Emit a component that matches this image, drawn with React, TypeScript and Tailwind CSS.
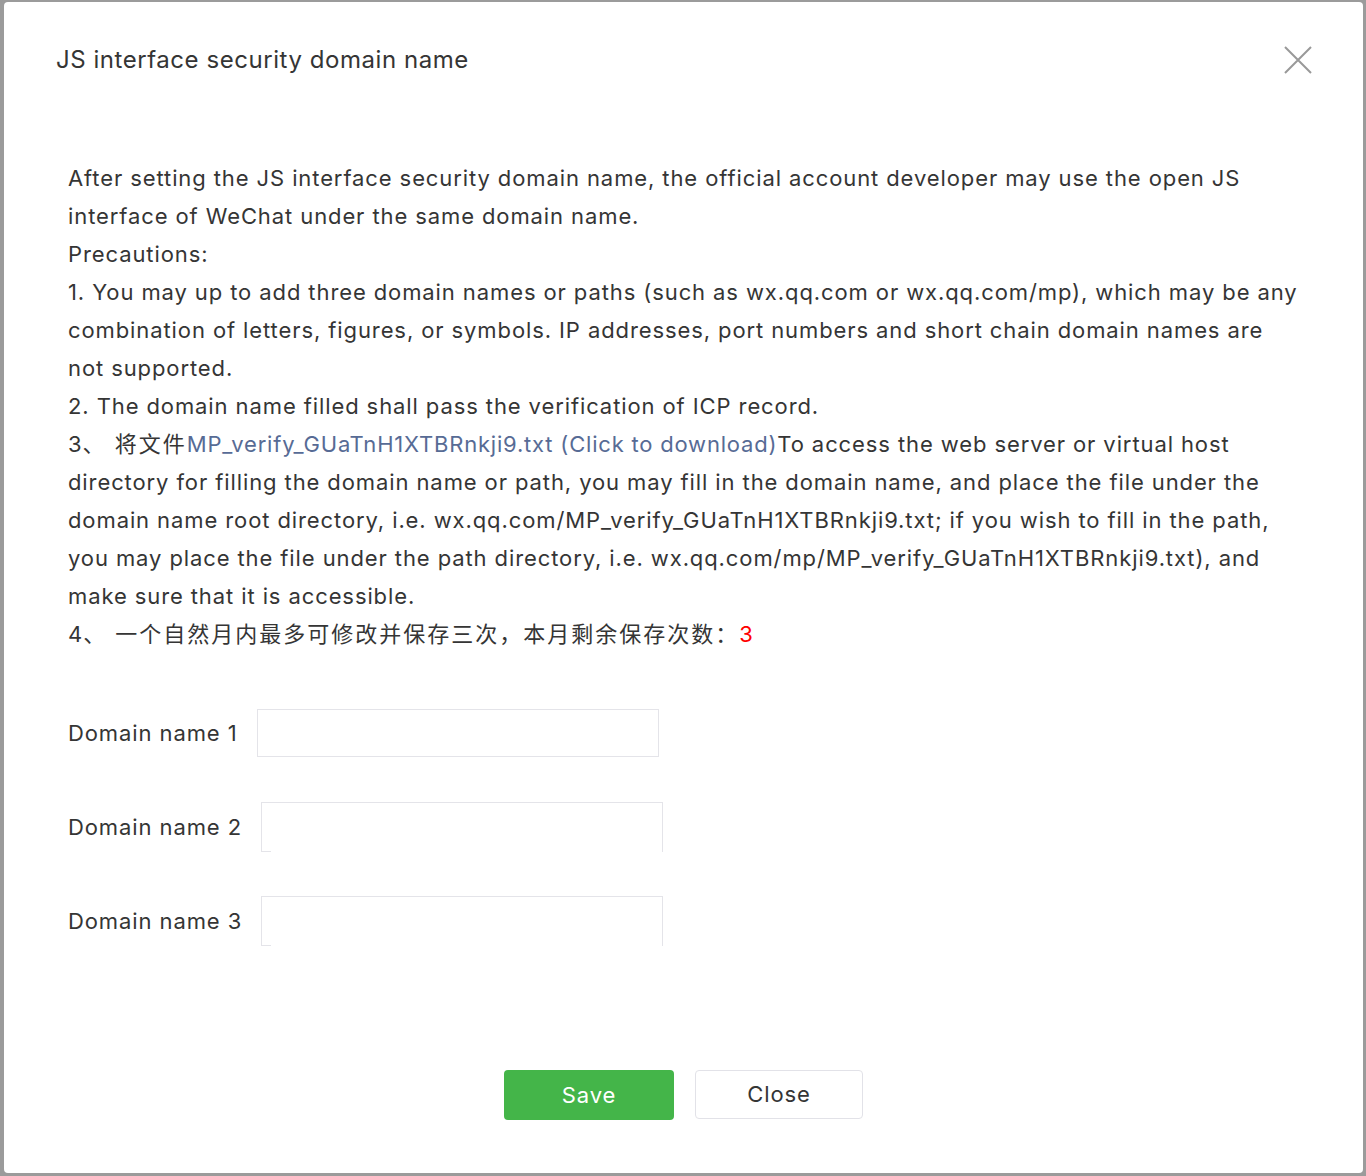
import React from 'react';

const FONT = { fontFamily: 'Inter, "Noto Sans CJK SC", sans-serif' };

const Cjk = ({ children }: { children: React.ReactNode }) => (
  <span className="tracking-[2px]">{children}</span>
);

const DomainRow = ({ label, broken }: { label: string; broken?: boolean }) => (
  <div className="flex items-center h-[48px]">
    <span className="whitespace-nowrap">{label}</span>
    <div
      className={
        broken
          ? 'relative ml-[19px] w-[402px] h-[50px] border border-b-0 border-[#e4e4e9]'
          : 'ml-[19px] w-[402px] h-[48px] border border-[#e4e4e9]'
      }
    >
      {broken && (
        <div className="absolute left-[-1px] bottom-0 w-[10px] h-px bg-[#e4e4e9]" />
      )}
    </div>
  </div>
);

const App = () => {
  return (
    <div
      className="h-[1176px] w-[1366px] bg-[#9b9b9b] pt-[2px] pl-[4px] pr-[3px] pb-[3px] text-[#353535]"
      style={FONT}
    >
      <div className="h-full bg-white rounded-[4px] flex flex-col">
        {/* header */}
        <div className="flex items-start justify-between pl-[52px] pr-[51px] pt-[42px]">
          <h3 className="text-[24px] leading-[32px] tracking-[0.55px]">JS interface security domain name</h3>
          <button className="mt-[2px] w-[28px] h-[28px] text-[#999]">
            <svg viewBox="0 0 28 28" width="28" height="28" fill="none" stroke="currentColor" strokeWidth="2">
              <path d="M1 1 L27 27 M27 1 L1 27" />
            </svg>
          </button>
        </div>

        {/* body */}
        <div className="px-[64px] pt-[83px] text-[22px] leading-[38px] tracking-[0.9px]">
          <p>
            After setting the JS interface security domain name, the official account developer may use the open JS
            interface of WeChat under the same domain name.
          </p>
          <p>Precautions:</p>
          <p>
            1. You may up to add three domain names or paths (such as wx.qq.com or wx.qq.com/mp), which may be any
            combination of letters, figures, or symbols. IP addresses, port numbers and short chain domain names are
            not supported.
          </p>
          <p>2. The domain name filled shall pass the verification of ICP record.</p>
          <p>
            3<Cjk>、 将文件</Cjk>
            <a className="text-[#576b95] tracking-[0.8px]">MP_verify_GUaTnH1XTBRnkji9.txt (Click to download)</a>
            To access the web server or virtual host directory for filling the domain name or path, you may fill in the
            domain name, and place the file under the domain name root directory, i.e.
            wx.qq.com/MP_verify_GUaTnH1XTBRnkji9.txt; if you wish to fill in the path, you may place the file under the
            path directory, i.e. wx.qq.com/mp/MP_verify_GUaTnH1XTBRnkji9.txt), and make sure that it is accessible.
          </p>
          <p>
            4<Cjk>、 一个自然月内最多可修改并保存三次，本月剩余保存次数：</Cjk>
            <span className="text-[#f00]">3</span>
          </p>

          <div className="mt-[56px] flex flex-col gap-[46px]">
            <DomainRow label="Domain name 1" />
            <DomainRow label="Domain name 2" broken />
            <DomainRow label="Domain name 3" broken />
          </div>
        </div>

        {/* footer */}
        <div className="mt-auto mb-[53px] flex justify-center gap-[21px]">
          <button className="w-[170px] h-[50px] rounded-[4px] bg-[#44b549] text-white text-[22px] tracking-[0.9px]">
            Save
          </button>
          <button className="w-[168px] h-[49px] rounded-[4px] border border-[#e2e2e8] bg-white text-[22px] tracking-[0.9px]">
            Close
          </button>
        </div>
      </div>
    </div>
  );
};

export default App;
